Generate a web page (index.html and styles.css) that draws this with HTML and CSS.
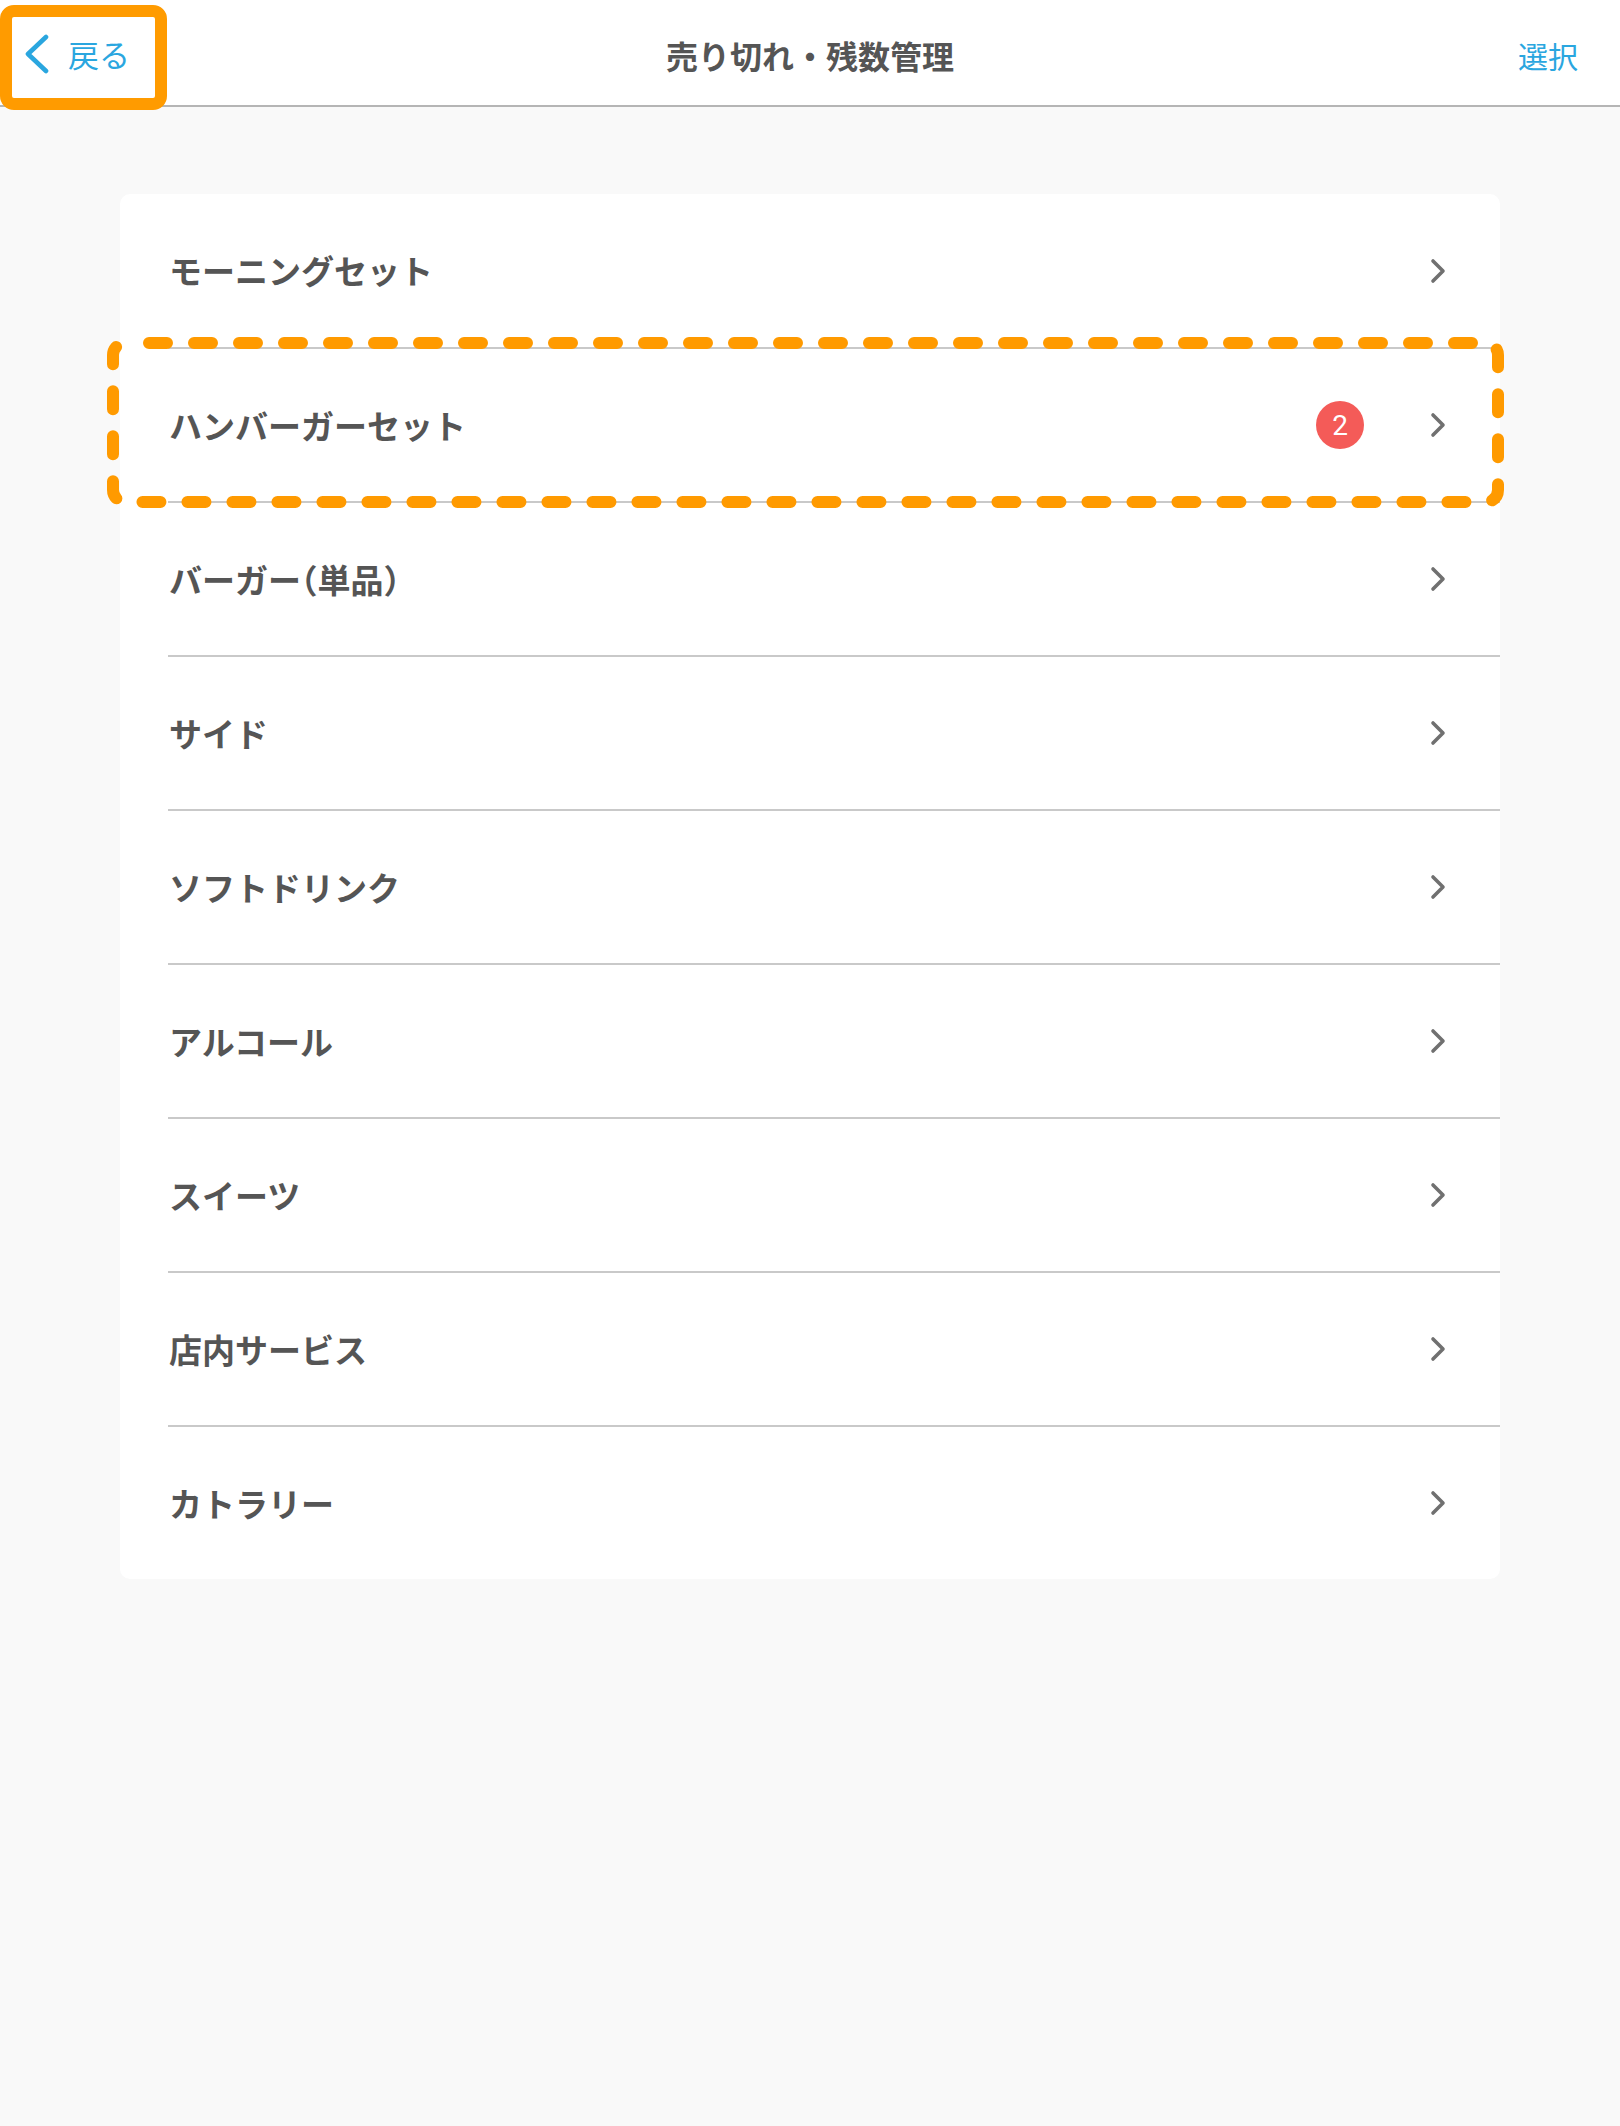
FILE: index.html
```html
<!DOCTYPE html>
<html lang="ja">
<head>
<meta charset="utf-8">
<title>売り切れ・残数管理</title>
<link rel="stylesheet" href="styles.css">
</head>
<body>
<header class="navbar">
  <div class="nav-left">
    <a class="back">
      <svg class="back-icon" width="26" height="40" viewBox="0 0 26 40"><polyline points="22,3 4,20 22,37" fill="none" stroke="#2aa6df" stroke-width="4.6" stroke-linecap="round" stroke-linejoin="round"/></svg>
      <span class="back-label">戻る</span>
    </a>
  </div>
  <h1 class="nav-title">売り切れ・残数管理</h1>
  <div class="nav-right"><a class="select">選択</a></div>
</header>
<div class="focus-box"></div>

<main class="content">
  <ul class="card">
    <li class="row first"><span class="label">モーニングセット</span><svg class="chev" width="16" height="26" viewBox="0 0 16 26"><polyline points="3,3 13,13 3,23" fill="none" stroke="#707070" stroke-width="3.6" stroke-linecap="round" stroke-linejoin="round"/></svg></li>
    <li class="row"><span class="label">ハンバーガーセット</span><span class="badge">2</span><svg class="chev" width="16" height="26" viewBox="0 0 16 26"><polyline points="3,3 13,13 3,23" fill="none" stroke="#707070" stroke-width="3.6" stroke-linecap="round" stroke-linejoin="round"/></svg></li>
    <li class="row"><span class="label">バーガー<span class="paren">（</span>単品<span class="paren">）</span></span><svg class="chev" width="16" height="26" viewBox="0 0 16 26"><polyline points="3,3 13,13 3,23" fill="none" stroke="#707070" stroke-width="3.6" stroke-linecap="round" stroke-linejoin="round"/></svg></li>
    <li class="row"><span class="label">サイド</span><svg class="chev" width="16" height="26" viewBox="0 0 16 26"><polyline points="3,3 13,13 3,23" fill="none" stroke="#707070" stroke-width="3.6" stroke-linecap="round" stroke-linejoin="round"/></svg></li>
    <li class="row"><span class="label">ソフトドリンク</span><svg class="chev" width="16" height="26" viewBox="0 0 16 26"><polyline points="3,3 13,13 3,23" fill="none" stroke="#707070" stroke-width="3.6" stroke-linecap="round" stroke-linejoin="round"/></svg></li>
    <li class="row"><span class="label">アルコール</span><svg class="chev" width="16" height="26" viewBox="0 0 16 26"><polyline points="3,3 13,13 3,23" fill="none" stroke="#707070" stroke-width="3.6" stroke-linecap="round" stroke-linejoin="round"/></svg></li>
    <li class="row"><span class="label">スイーツ</span><svg class="chev" width="16" height="26" viewBox="0 0 16 26"><polyline points="3,3 13,13 3,23" fill="none" stroke="#707070" stroke-width="3.6" stroke-linecap="round" stroke-linejoin="round"/></svg></li>
    <li class="row"><span class="label">店内サービス</span><svg class="chev" width="16" height="26" viewBox="0 0 16 26"><polyline points="3,3 13,13 3,23" fill="none" stroke="#707070" stroke-width="3.6" stroke-linecap="round" stroke-linejoin="round"/></svg></li>
    <li class="row"><span class="label">カトラリー</span><svg class="chev" width="16" height="26" viewBox="0 0 16 26"><polyline points="3,3 13,13 3,23" fill="none" stroke="#707070" stroke-width="3.6" stroke-linecap="round" stroke-linejoin="round"/></svg></li>
  </ul>
</main>

<svg class="dash-box" width="1397" height="171" viewBox="0 0 1397 171"><rect x="6" y="6" width="1385" height="159" rx="12" ry="12" fill="none" stroke="#ff9a00" stroke-width="12" stroke-linecap="round" stroke-dasharray="18 27" stroke-dashoffset="21"/></svg>
</body>
</html>
```

FILE: styles.css
```css
html, body {
  margin: 0;
  padding: 0;
}
body {
  background: #f9f9f9;
  font-family: "Noto Sans CJK JP", "Noto Sans", sans-serif;
  width: 1620px;
  min-height: 2126px;
  position: relative;
}
.navbar {
  height: 105px;
  background: #ffffff;
  border-bottom: 2px solid #b5b5b5;
  display: grid;
  grid-template-columns: 1fr auto 1fr;
  align-items: center;
}
.nav-left {
  display: flex;
  align-items: center;
  padding-left: 24px;
}
.back {
  display: flex;
  align-items: center;
  gap: 18px;
  color: #2aa6df;
  text-decoration: none;
}
.back-icon {
  display: block;
  margin-top: 2px;
}
.back-label {
  font-size: 31px;
  font-weight: 400;
  line-height: 1;
  margin-top: 2px;
}
.nav-title {
  margin: 0;
  font-size: 32px;
  font-weight: 700;
  color: #555555;
  line-height: 1;
  margin-top: 4px;
}
.nav-right {
  display: flex;
  justify-content: flex-end;
  padding-right: 42px;
}
.select {
  font-size: 30px;
  color: #2aa6df;
  line-height: 1;
  margin-top: 4px;
}
.focus-box {
  position: absolute;
  left: 0;
  top: 5px;
  width: 167px;
  height: 105px;
  box-sizing: border-box;
  border: 12px solid #ff9b00;
  border-radius: 14px;
}
.content {
  padding: 87px 0 0 120px;
}
.card {
  list-style: none;
  margin: 0;
  padding: 0;
  width: 1380px;
  background: #ffffff;
  border-radius: 10px;
}
.row {
  display: flex;
  align-items: center;
  height: 152px;
  margin-left: 48px;
  padding-right: 54px;
  border-top: 2px solid #c9c9c9;
}
.row.first {
  border-top: none;
  height: 153px;
}
.label {
  flex: 1;
  font-size: 33px;
  font-weight: 700;
  color: #555555;
  line-height: 1;
  padding-left: 1px;
}
.paren {
  font-feature-settings: "halt";
}
.badge {
  width: 48px;
  height: 48px;
  border-radius: 50%;
  background: #f45b58;
  color: #ffffff;
  font-family: Roboto, "Noto Sans", sans-serif;
  font-size: 28px;
  display: flex;
  align-items: center;
  justify-content: center;
  margin-right: 66px;
}
.chev {
  display: block;
}
.dash-box {
  position: absolute;
  left: 107px;
  top: 337px;
}
```
